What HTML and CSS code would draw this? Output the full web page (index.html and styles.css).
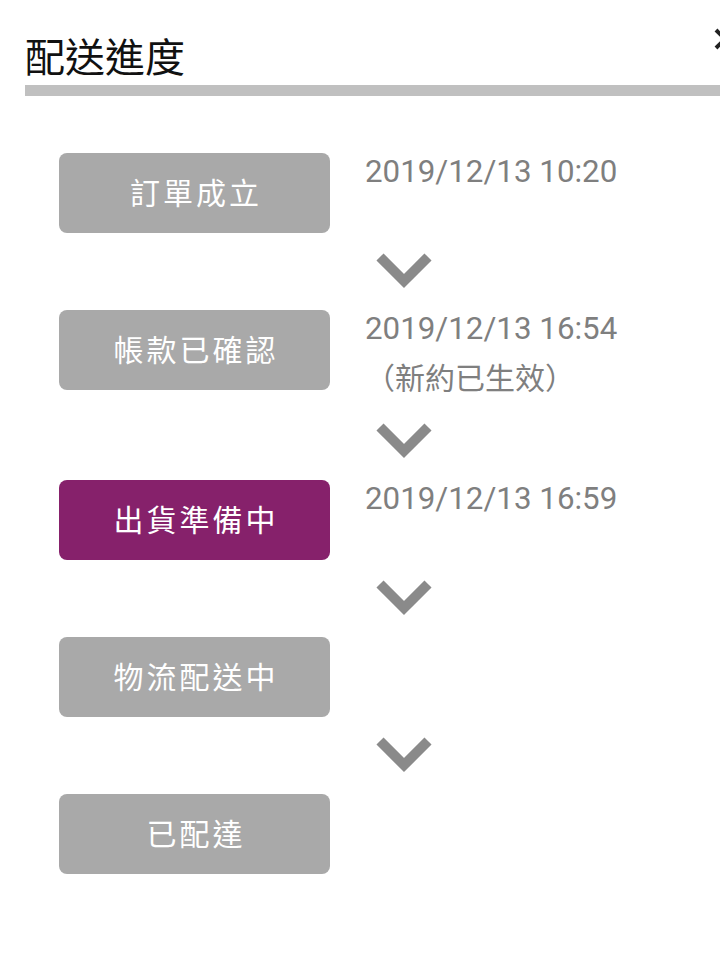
FILE: index.html
```html
<!DOCTYPE html>
<html>
	<head>
		<meta charset="UTF-8">
		<title>配送進度</title>
		<link rel="stylesheet" href="styles.css">
	</head>
	<body>
		<div class="sheet">
			<div class="sheet-head">
				<h2 class="sheet-title">配送進度</h2>
				<a class="close-btn" href="javascript:void(0);">
					<svg width="24" height="24" viewBox="0 0 24 24"><path d="M3 3 L21 21 M21 3 L3 21" stroke="#222" stroke-width="4" fill="none"/></svg>
				</a>
			</div>
			<div class="sheet-bar"></div>
			<ul class="steps">
				<li class="step">
					<span class="step-btn">訂單成立</span>
					<div class="step-info">2019/12/13 10:20</div>
				</li>
				<li class="arrow"><svg width="60" height="40" viewBox="0 0 60 40"><polyline points="6,5 30,29 54,5" fill="none" stroke="#8a8a8a" stroke-width="10"/></svg></li>
				<li class="step">
					<span class="step-btn">帳款已確認</span>
					<div class="step-info">2019/12/13 16:54<br><span class="step-note">（新約已生效）</span></div>
				</li>
				<li class="arrow"><svg width="60" height="40" viewBox="0 0 60 40"><polyline points="6,5 30,29 54,5" fill="none" stroke="#8a8a8a" stroke-width="10"/></svg></li>
				<li class="step">
					<span class="step-btn current">出貨準備中</span>
					<div class="step-info">2019/12/13 16:59</div>
				</li>
				<li class="arrow"><svg width="60" height="40" viewBox="0 0 60 40"><polyline points="6,5 30,29 54,5" fill="none" stroke="#8a8a8a" stroke-width="10"/></svg></li>
				<li class="step">
					<span class="step-btn">物流配送中</span>
					<div class="step-info"></div>
				</li>
				<li class="arrow"><svg width="60" height="40" viewBox="0 0 60 40"><polyline points="6,5 30,29 54,5" fill="none" stroke="#8a8a8a" stroke-width="10"/></svg></li>
				<li class="step">
					<span class="step-btn">已配達</span>
					<div class="step-info"></div>
				</li>
			</ul>
		</div>
	</body>
</html>
```

FILE: styles.css
```css
html, body {
	margin: 0;
	padding: 0;
	background-color: #fff;
	overflow: hidden;
}
body {
	font-family: Roboto, "Noto Sans CJK TC", sans-serif;
}
.sheet {
	padding: 35px 0 0 25px;
}
.sheet-head {
	display: flex;
	align-items: flex-start;
	justify-content: space-between;
	height: 40px;
}
.sheet-title {
	margin: 0;
	font: 400 40px/40px "Noto Sans CJK TC", sans-serif;
	color: #111;
}
.close-btn {
	display: block;
	margin: -8px -17px 0 0;
	width: 24px;
	height: 24px;
}
.sheet-bar {
	margin-top: 10px;
	height: 11px;
	background-color: #c0c0c0;
}
.steps {
	list-style: none;
	margin: 57px 0 0;
	padding: 0 0 0 34px;
}
.step {
	display: flex;
	align-items: flex-start;
	min-height: 80px;
}
.step-btn {
	flex: none;
	width: 271px;
	height: 80px;
	border-radius: 8px;
	background-color: #a9a9a9;
	color: #fff;
	text-align: center;
	font: 400 30px/76px "Noto Sans CJK TC", sans-serif;
	letter-spacing: 3px;
	text-indent: 3px;
}
.step-btn.current {
	background-color: #86216b;
}
.step-info {
	margin: -6px 0 0 35px;
	font-size: 31.3px;
	line-height: 49px;
	color: #7f7f7f;
}
.step-note {
	font-family: "Noto Sans CJK TC", sans-serif;
	font-size: 30px;
	line-height: 46px;
}
.arrow {
	display: flex;
	align-items: center;
	height: 77px;
	padding-left: 315px;
}
.arrow svg {
	display: block;
}
```
